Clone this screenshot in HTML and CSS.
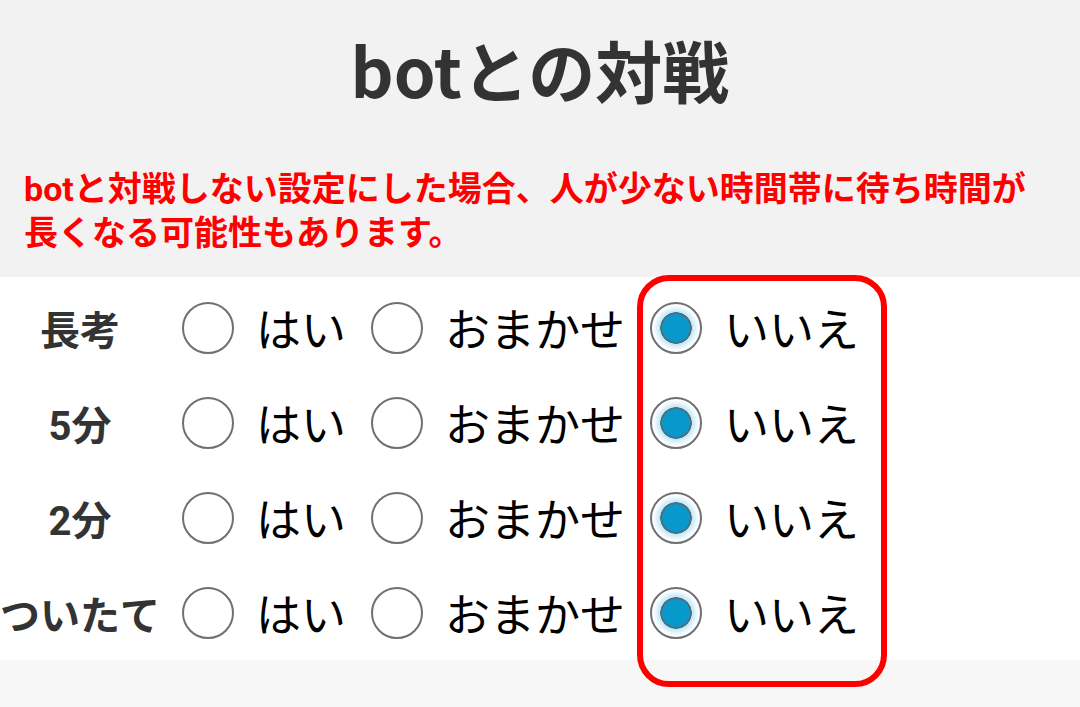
FILE: index.html
```html
<!DOCTYPE html>
<html lang="ja">
<head>
    <meta charset="UTF-8">
    <meta name="viewport" content="width=device-width, initial-scale=1.0">
    <title>botとの対戦</title>
    <link rel="stylesheet" href="styles.css">
</head>
<body>

<div class="header">
    <h1>botとの対戦</h1>
    <p class="warning">botと対戦しない設定にした場合、人が少ない時間帯に待ち時間が長くなる可能性もあります。</p>
</div>

<div class="settings">
    <div class="row">
        <span class="label">長考</span>
        <label class="opt"><input type="radio" name="long" value="yes"><span>はい</span></label>
        <label class="opt"><input type="radio" name="long" value="auto"><span>おまかせ</span></label>
        <label class="opt"><input type="radio" name="long" value="no" checked><span>いいえ</span></label>
    </div>
    <div class="row">
        <span class="label">5分</span>
        <label class="opt"><input type="radio" name="five" value="yes"><span>はい</span></label>
        <label class="opt"><input type="radio" name="five" value="auto"><span>おまかせ</span></label>
        <label class="opt"><input type="radio" name="five" value="no" checked><span>いいえ</span></label>
    </div>
    <div class="row">
        <span class="label">2分</span>
        <label class="opt"><input type="radio" name="two" value="yes"><span>はい</span></label>
        <label class="opt"><input type="radio" name="two" value="auto"><span>おまかせ</span></label>
        <label class="opt"><input type="radio" name="two" value="no" checked><span>いいえ</span></label>
    </div>
    <div class="row">
        <span class="label">ついたて</span>
        <label class="opt"><input type="radio" name="wall" value="yes"><span>はい</span></label>
        <label class="opt"><input type="radio" name="wall" value="auto"><span>おまかせ</span></label>
        <label class="opt"><input type="radio" name="wall" value="no" checked><span>いいえ</span></label>
    </div>

    <div class="highlight"></div>
</div>

<div class="footer">
    <h2>ルール</h2>
</div>

</body>
</html>
```

FILE: styles.css
```css
body {
    font-family: Roboto, "Noto Sans CJK JP", sans-serif;
    margin: 0;
    background-color: #f7f7f7;
    overflow: hidden;
}

.header {
    background-color: #f2f2f2;
    height: 277px;
    padding: 1px 24px 0;
    box-sizing: border-box;
}

h1 {
    font-family: "Noto Sans CJK JP", sans-serif;
    font-size: 67px;
    font-weight: bold;
    color: #333;
    text-align: center;
    margin: 24px 0 0;
    line-height: 1.3;
}

.warning {
    color: #ff0000;
    font-size: 34px;
    font-weight: bold;
    line-height: 44px;
    margin: 55px 0 0;
}

.settings {
    position: relative;
    background-color: #ffffff;
    padding-top: 3px;
}

.row {
    display: flex;
    align-items: center;
    height: 95px;
}

.label {
    width: 160px;
    text-align: center;
    font-size: 40px;
    font-weight: bold;
    color: #333;
    white-space: nowrap;
}

.opt {
    display: flex;
    align-items: center;
    font-size: 45px;
    color: #000;
}

.opt input {
    appearance: none;
    -webkit-appearance: none;
    width: 52px;
    height: 52px;
    margin: 0 22px 0 25px;
    border: 2px solid #707070;
    border-radius: 50%;
    background-color: #fff;
    box-sizing: border-box;
}

.opt:first-of-type input {
    margin-left: 22px;
}

.opt input:checked {
    background: radial-gradient(circle at 50% 50%, #0899cc 0, #0899cc 13.5px, #4d6f80 14px, #4d6f80 15.5px, #bfe8f7 16px, #e6f6fc 20px, #ffffff 23px);
}

.highlight {
    position: absolute;
    left: 637px;
    top: -2px;
    width: 250px;
    height: 412px;
    border: 6px solid #ff0000;
    border-radius: 32px;
    box-sizing: border-box;
}

.footer {
    height: 60px;
}

h2 {
    margin: 32px 0 0;
    text-align: center;
    font-size: 48px;
    color: #555;
}
```
